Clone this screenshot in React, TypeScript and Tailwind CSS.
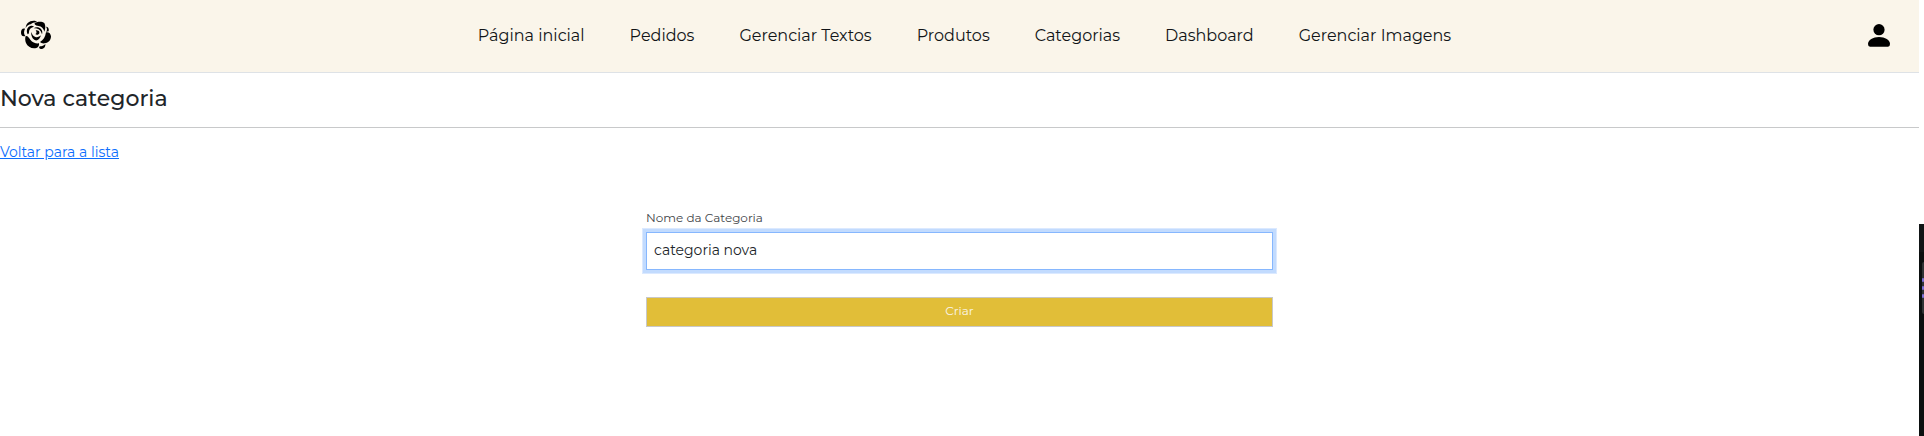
import { useState } from "react";

const links = [
  "Página inicial",
  "Pedidos",
  "Gerenciar Textos",
  "Produtos",
  "Categorias",
  "Dashboard",
  "Gerenciar Imagens",
];

function RoseLogo() {
  return (
    <svg viewBox="60 60 96 96" className="size-8" aria-hidden="true">
      <path d="M75 86C66 84 63 91 63 98C63 105 67 111 76 108C71 102 71 94 75 86Z" />
      <path d="M77 84C78 71 87 62 101 62C106 62 110 64 113 67C104 66 97 68 92 73C87 73 81 77 77 84Z" />
      <path d="M103 71C111 64 126 64 133 69C137 76 137 86 133 95C131 86 124 79 116 78C111 77 106 76 103 71Z" />
      <path d="M138 80C144 80 148 86 146 94L138 95C142 91 142 85 138 80Z" />
      <path d="M138 97C146 95 152 100 153 109C153 120 146 128 134 130C128 131 123 129 120 126C130 121 136 111 138 97Z" />
      <path d="M77 108C84 107 86 113 91 119C98 128 107 131 117 130C118 136 116 142 109 144C96 147 83 141 78 129C75 122 75 114 77 108Z" />
      <path d="M119 139C126 139 132 136 136 132C137 141 131 147 122 147L117 144Z" />
      <path d="M83 103C78 92 81 82 91 78C95 77 99 77 102 80C94 82 87 87 87 95C87 99 86 102 83 103Z" />
      <path d="M101 85C107 80 118 81 123 87C127 91 128 98 126 103C124 96 121 91 116 88C111 85 106 84 101 85Z" />
      <path d="M94 96C96 104 100 109 106 111C113 113 118 110 123 106C120 116 113 123 106 121C98 118 92 106 94 96Z" />
      <path d="M107 91C114 90 120 94 118 100C116 105 109 106 106 102C110 101 111 97 107 91Z" />
    </svg>
  );
}

export default function App() {
  const [name, setName] = useState("categoria nova");

  return (
    <div className="flex min-h-screen bg-white font-['Montserrat','Inter',sans-serif] text-[#212529]">
      <div className="min-w-0 flex-1">
        <header className="flex h-[73px] items-center justify-between border-b border-[#dee2e6] bg-[#faf5ea] px-5">
          <a href="#inicio" aria-label="Início" className="w-[50px] text-black">
            <RoseLogo />
          </a>
          <nav className="flex gap-[45px] text-base leading-6 text-[#111417]">
            {links.map((link) => (
              <a key={link} href="#" className="whitespace-nowrap">
                {link}
              </a>
            ))}
          </nav>
          <button type="button" aria-label="Conta" className="flex w-10 justify-center">
            <svg viewBox="0 0 22 24" className="h-6 w-[22px]" aria-hidden="true">
              <circle cx="11" cy="5.7" r="5.6" />
              <path d="M0 20C0 16 5 13 11 13S22 16 22 20Q22 22.7 20 22.7H2Q0 22.7 0 20Z" />
            </svg>
          </button>
        </header>
        <main>
          <h1 className="border-b border-[#c8c9ca] pt-2.5 pb-3 text-[22px] leading-8 font-medium">
            Nova categoria
          </h1>
          <a
            href="#lista"
            className="mt-3 inline-block text-sm leading-6 text-[#0d6efd] underline"
          >
            Voltar para a lista
          </a>
          <form
            className="mx-auto mt-11 flex w-1/3 max-w-[627px] flex-col"
            onSubmit={(event) => event.preventDefault()}
          >
            <label htmlFor="nome" className="text-xs leading-5 text-[#3f4549]">
              Nome da Categoria
            </label>
            <input
              id="nome"
              value={name}
              onChange={(event) => setName(event.target.value)}
              className="mt-1 h-[38px] border border-[#86b7fe] bg-white px-[7px] pb-0.5 text-sm shadow-[0_0_0_3px_#c2dbfe,0_0_0_4px_#dbe9ff] outline-none"
            />
            <button
              type="submit"
              className="mt-[27px] h-[30px] border border-[#c8c8c8] bg-[#e1be38] pb-0.5 text-xs text-[#faf5ea]"
            >
              Criar
            </button>
          </form>
        </main>
      </div>
      <aside className="mt-[224px] w-[5px] bg-[#0b0f0f]">
        <div className="h-7 bg-[#111516]" />
        <div className="mt-2.5 ml-[3px] flex h-[52px] flex-col items-end justify-center gap-1 rounded-l-sm bg-[#303435]">
          <i className="size-1 max-w-full rounded-full bg-[#7d70d8]" />
          <i className="size-1 max-w-full rounded-full bg-[#7d70d8]" />
          <i className="size-1 max-w-full rounded-full bg-[#7d70d8]" />
        </div>
      </aside>
    </div>
  );
}
